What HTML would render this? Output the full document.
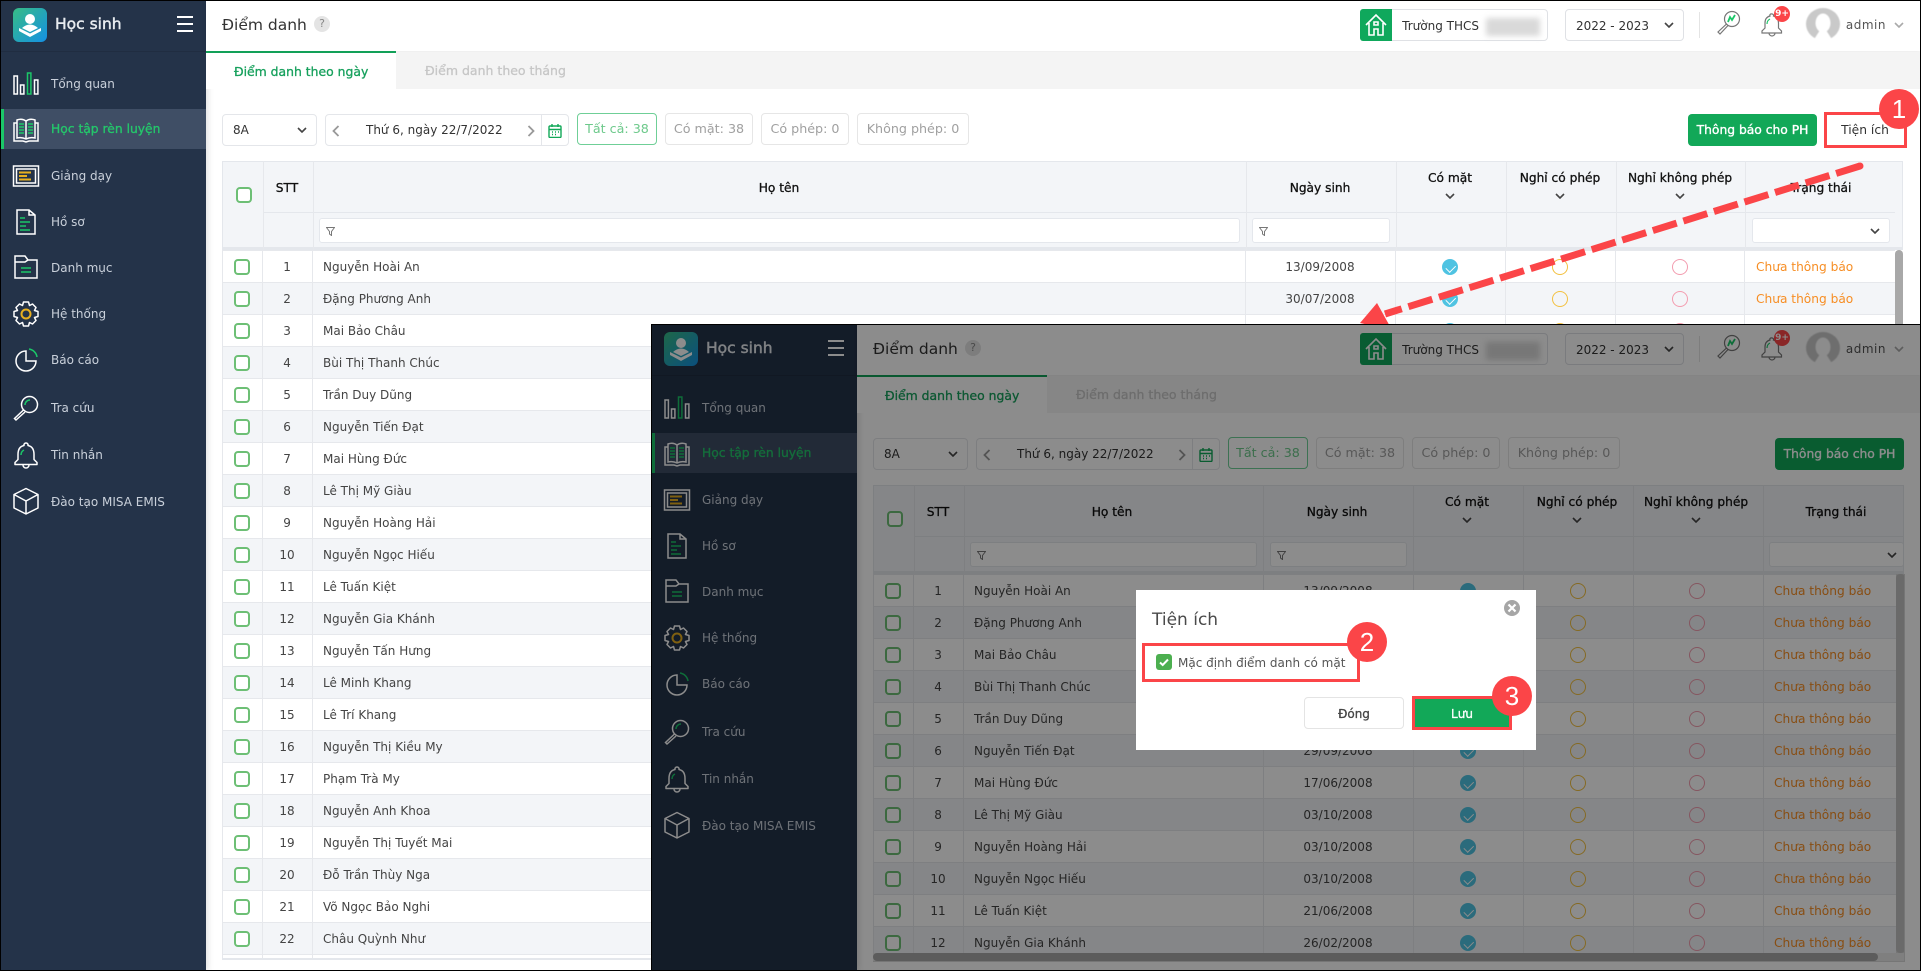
<!DOCTYPE html>
<html lang="vi"><head><meta charset="utf-8"><title>Điểm danh</title>
<style>
*{box-sizing:border-box}
html,body{margin:0;padding:0;width:1921px;height:971px;overflow:hidden;background:#fff;font:12px/1.2 "DejaVu Sans","Liberation Sans",sans-serif;color:#333}
.v{position:absolute;overflow:hidden;background:#fff}
#A{left:0;top:0;width:1921px;height:971px}
#B{left:651px;top:324px;width:1270px;height:647px}
.v>*,.r>*{position:absolute}
.t{white-space:nowrap}
.c{transform:translateX(-50%);white-space:nowrap}
.bb{-webkit-text-stroke:.3px currentColor}
.side{left:0;top:0;width:206px;height:100%;background:#243349;box-shadow:2px 0 6px rgba(0,0,0,.12)}
.side>*{position:absolute}
.m{left:51px;color:#c9d0da;white-space:nowrap;line-height:16px}
.ic{left:12px;width:28px;height:28px;fill:none;stroke:#fff;stroke-width:1.5}
.g{stroke:#1bc768}.y2{stroke:#e8b020}
.logo{left:13px;top:8px;width:34px;height:34px;border-radius:6px;background:linear-gradient(135deg,#37bd85,#1490e4)}
.ham{left:177px;width:16px;height:2px;background:#fff}
.hline{left:1px;top:51px;width:205px;height:1px;background:#202d41}
.act{left:1px;top:109px;width:205px;height:40px;background:#3f4e65;border-left:3px solid #1bc768}
.top{left:206px;right:0;top:0;height:51px;background:#fff;box-shadow:0 1px 4px rgba(0,0,0,.1)}
.strip{left:206px;right:0;top:52px;height:37px;background:#f4f4f4}
.tabl{left:206px;top:51px;width:190px;height:38px;background:#fff;border-top:2.5px solid #12a058}
.box{background:#fff;border:1px solid #dfe1e5;border-radius:4px}
.chip{top:113px;height:32px;border:1px solid #e6e6e6;border-radius:4px;background:#fff;color:#a0a0a0;font-size:12.7px;line-height:30px;text-align:center;white-space:nowrap}
.chev{width:10px;height:6px;fill:none;stroke:#444;stroke-width:1.6}
.gbtn{top:114px;width:129px;height:32px;background:#12a858;border-radius:4px;color:#fff;font-size:12.3px;line-height:32px;text-align:center;-webkit-text-stroke:.35px #fff;white-space:nowrap}
.th{background:#f3f5f8;left:222px;top:161px;height:89px;border:1px solid #e4e7ec;border-bottom:3px solid #e4e7ec}
.hl{height:1px;background:#e4e7ec;top:212px;left:263px}
.vl{width:1px;background:#e6e8ec;top:161px}
.tx{color:#111;line-height:16px;white-space:nowrap;font-size:12.2px}
.fi{top:218px;height:25px;background:#fff;border:1px solid #e4e7ec;border-radius:3px}
.fn{top:227px;width:9px;height:9px;fill:none;stroke:#777;stroke-width:1}
.r{left:222px;height:32px;background:#fff;border-top:1px solid #e6e8ec}
.r.e{background:#f3f5f8}
.k{left:12px;top:8px;width:16px;height:16px;border:2px solid #6dbf75;border-radius:4px;background:#fff}
.s{left:65px;width:0;text-align:center;line-height:33px;display:flex;justify-content:center;white-space:nowrap;color:#444}
.n{left:101px;line-height:33px;color:#444;white-space:nowrap}
.d{line-height:33px;color:#444;white-space:nowrap;transform:translateX(-50%)}
.o{top:8px;width:16px;height:16px;border-radius:50%;transform:translateX(-50%);border:1px solid}
.a{background:#4fc3e2;border-color:#4fc3e2}
.a:after{content:"";position:absolute;left:4.5px;top:2.5px;width:4.5px;height:7.5px;border:solid #fff;border-width:0 1.5px 1.5px 0;transform:rotate(45deg)}
.y{border-color:#f3c141}.p{border-color:#f39db0}
.st{line-height:33px;color:#f78e24;white-space:nowrap;font-size:12.2px}
#A .d{left:1098px}#A .o1{left:1228px}#A .o2{left:1338px}#A .o3{left:1458px}#A .st{left:1534px}
#B .d{left:465px}#B .o1{left:595px}#B .o2{left:705px}#B .o3{left:824px}#B .st{left:901px}
#A .r{width:1673px}#B .r{width:1023px}
.dim{left:0;top:0;width:100%;height:100%;background:rgba(0,0,0,.45)}
.frame{position:absolute;background:#000}
.modal{position:absolute;left:1136px;top:590px;width:400px;height:160px;background:#fff}
.redb{position:absolute;border:3px solid #fb4548}
.num{position:absolute;width:40px;height:40px;border-radius:50%;background:#fb4548;color:#fff;font:26px/40px "Liberation Sans",sans-serif;text-align:center}
.abs{position:absolute;white-space:nowrap}
</style></head><body>
<svg width="0" height="0" style="position:absolute"><defs>
<symbol id="i1" viewBox="0 0 28 28"><rect x="2" y="7" width="3.4" height="18"/><rect x="8.5" y="16" width="3.4" height="9"/><rect class="g" x="15.5" y="4" width="3.4" height="21"/><rect x="22.5" y="11" width="3.4" height="14"/></symbol>
<symbol id="i2" viewBox="0 0 28 28"><path d="M5 5q5-2 9 1q4-3 9-1V23q-5-1-9 1q-4-2-9-1ZM14 6V24M5 8H2V26H11l3 1 3-1h9V8h-3"/><path class="g" d="M7 9h5M7 12h5M7 15h5M7 18h5M16 9h5M16 12h5M16 15h5M16 18h5"/></symbol>
<symbol id="i3" viewBox="0 0 28 28"><rect x="1.5" y="5" width="25" height="20"/><rect x="4.5" y="8" width="19" height="14"/><path class="y2" stroke-width="2" d="M7 11.500h12M7 15h8M7 18.500h12"/></symbol>
<symbol id="i4" viewBox="0 0 28 28"><path d="M5 3h12l6 5v19H5ZM17 3v5h6"/><path class="g" d="M8 11h5M8 15h10M8 19h6M8 23h10"/></symbol>
<symbol id="i5" viewBox="0 0 28 28"><path d="M3 3h10l3 4h9v18H3ZM3 9h10l3-2"/><path class="g" d="M9 15h10M9 19h10"/></symbol>
<symbol id="i6" viewBox="0 0 28 28"><path stroke-linejoin="round" d="M11.500 2h5l1 3.500 3-1.500 3.500 3.500-1.500 3 3.500 1v5l-3.500 1 1.500 3-3.500 3.500-3-1.500-1 3.500h-5l-1-3.500-3 1.500-3.500-3.500 1.500-3-3.500-1v-5l3.500-1-1.500-3 3.500-3.500 3 1.500z"/><circle class="y2" cx="14" cy="14" r="4.500" stroke-width="2"/></symbol>
<symbol id="i7" viewBox="0 0 28 28"><path d="M14 5a10 10 0 1 0 10 10H14Z"/><path class="g" d="M17 3a9.500 9.500 0 0 1 8 8"/></symbol>
<symbol id="i8" viewBox="0 0 28 28"><circle cx="17.500" cy="10.500" r="8"/><path d="M11.500 16 2.500 24.500 4 26 13 18"/><path class="g" d="M13 11a5 5 0 0 1 5-5"/></symbol>
<symbol id="i9" viewBox="0 0 28 28"><path stroke-linejoin="round" d="M14 2a2 2 0 0 1 2 2.500c5 1 6 5 6 9v5l3 3v2H3v-2l3-3v-5c0-4 1-8 6-9A2 2 0 0 1 14 2zM11 24a3 3 0 0 0 6 0"/><path class="g" d="M9 14c0-2 1-4 3-5"/></symbol>
<symbol id="i10" viewBox="0 0 28 28"><path stroke-linejoin="round" d="M14 1.500 26 7.500V21L14 27 2 21V7.500ZM2 7.500 14 14l12-6.500M14 14V27"/></symbol>
<symbol id="lg" viewBox="0 0 34 34"><circle cx="17" cy="11" r="5" fill="#fff"/><path d="M9 20q8-7 16 0l-8 4z" fill="#fff"/><path d="M6 20l11 5.500L28 20v3l-11 6L6 23z" fill="#fff"/></symbol>
<symbol id="dn" viewBox="0 0 10 6"><path d="M1 1l4 4 4-4"/></symbol>
<symbol id="fn" viewBox="0 0 9 9"><path d="M.5.500h8L5.500 4.500V8.500L3.500 7V4.500z"/></symbol>
<symbol id="av" viewBox="0 0 34 33"><ellipse cx="17" cy="16" rx="17" ry="16" fill="#c9c9c9"/><ellipse cx="17" cy="15" rx="7.500" ry="9.500" fill="#fff"/><path d="M14 22h6l7 11H7z" fill="#fff"/></symbol>
</defs></svg>

<div id="A" class="v">
<div class="side"><div class="logo"><svg width="34" height="34"><use href="#lg"/></svg></div><div class="t" style="left:55px;top:15px;font-size:15.5px;color:#e8ecf0;-webkit-text-stroke:.45px #e8ecf0">Học sinh</div><div class="ham" style="top:16px"></div><div class="ham" style="top:23px"></div><div class="ham" style="top:30px"></div><div class="hline"></div><div class="act"></div>
<svg class="ic" style="top:69px"><use href="#i1"/></svg><div class="m" style="top:76px">Tổng quan</div>
<svg class="ic" style="top:115px"><use href="#i2"/></svg><div class="m bb" style="top:121px;color:#24c86b;font-size:12.3px">Học tập rèn luyện</div>
<svg class="ic" style="top:161px"><use href="#i3"/></svg><div class="m" style="top:168px">Giảng dạy</div>
<svg class="ic" style="top:207px"><use href="#i4"/></svg><div class="m" style="top:214px">Hồ sơ</div>
<svg class="ic" style="top:253px"><use href="#i5"/></svg><div class="m" style="top:260px">Danh mục</div>
<svg class="ic" style="top:300px"><use href="#i6"/></svg><div class="m" style="top:306px">Hệ thống</div>
<svg class="ic" style="top:346px"><use href="#i7"/></svg><div class="m" style="top:352px">Báo cáo</div>
<svg class="ic" style="top:394px"><use href="#i8"/></svg><div class="m" style="top:400px">Tra cứu</div>
<svg class="ic" style="top:441px"><use href="#i9"/></svg><div class="m" style="top:447px">Tin nhắn</div>
<svg class="ic" style="top:487px"><use href="#i10"/></svg><div class="m" style="top:494px">Đào tạo MISA EMIS</div>
</div>
<div class="top"></div>
<div class="t" style="left:222px;top:16px;font-size:15.500px;color:#333">Điểm danh</div>
<div style="left:314px;top:16px;width:16px;height:16px;border-radius:50%;background:#e4e4e4;color:#888;text-align:center;line-height:16px;font-size:11px">?</div>
<div style="right:373px;top:9px;width:188px;height:32px" class="box"></div><div style="right:529px;top:9px;width:32px;height:32px;background:#0fa85c;border-radius:3px 0 0 3px"><svg width="32" height="32" fill="none" stroke="#fff" stroke-width="1.6"><path d="M6 16 16 6l10 10M9 14v12h5v-6h4v6h5V14M14 13h4v3h-4z"/></svg></div>
<div class="t" style="right:442px;top:18px;line-height:16px">Trường THCS</div><div style="right:381px;top:18px;width:54px;height:18px;background:#d9d9d9;filter:blur(3px)"></div>
<div class="box" style="right:237px;top:9px;width:119px;height:32px"></div><div class="t" style="right:272px;top:18px;line-height:16px">2022 - 2023</div><svg class="chev" style="right:247px;top:22px"><use href="#dn"/></svg>
<div style="right:221px;top:12px;width:1px;height:26px;background:#e4e4e4"></div>
<svg style="right:180px;top:10px" width="25" height="25" fill="none" stroke="#777" stroke-width="1.200"><circle cx="16" cy="9" r="7.500"/><path d="M10.500 14 2 22l2 2 8-8.500"/><path stroke="#1bc768" stroke-width="1.800" d="M12 12l2-5 2 3 3-5"/></svg>
<svg style="right:137px;top:12px" width="24" height="26" fill="none" stroke="#777" stroke-width="1.200"><path d="M12 2a1.500 1.500 0 0 1 1.500 2c4 1 5 4 5 7v5l3 3v2H2v-2l3-3v-5c0-3 1-6 5-7A1.500 1.500 0 0 1 12 2zM9 21a3 3 0 0 0 6 0"/><path stroke="#1bc768" d="M7 12c0-2 1-4 3-5"/></svg>
<div style="right:131px;top:6px;width:16px;height:16px;border-radius:50%;background:#fb4548;color:#fff;font-size:9px;line-height:16px;text-align:center;font-weight:bold">9+</div>
<svg style="right:81px;top:8px;filter:blur(.5px)" width="34" height="33"><use href="#av"/></svg>
<div class="t" style="right:35px;top:17px;line-height:16px;color:#555;letter-spacing:.5px">admin</div><svg class="chev" style="right:17px;top:22px;stroke:#aaa"><use href="#dn"/></svg>

<div class="strip"></div><div class="tabl"></div>
<div class="t bb" style="left:234px;top:64px;font-size:12.400px;line-height:16px;color:#16a05c">Điểm danh theo ngày</div>
<div class="t bb" style="left:425px;top:63px;font-size:12.500px;line-height:16px;color:#c6c6c6">Điểm danh theo tháng</div>

<div class="box" style="left:222px;top:114px;width:95px;height:32px;border-color:#e4e6ea"></div><div class="t" style="left:233px;top:122px;line-height:16px">8A</div><svg class="chev" style="left:297px;top:127px"><use href="#dn"/></svg>
<div class="box" style="left:325px;top:114px;width:244px;height:32px;border-color:#e4e6ea"></div><div style="left:541px;top:114px;width:1px;height:32px;background:#e4e6ea"></div>
<svg style="left:332px;top:125px;fill:none;stroke:#999;stroke-width:1.800" width="8" height="12"><path d="M6.500 1 1.500 6l5 5"/></svg><div class="t" style="left:366px;top:122px;line-height:16px">Thứ 6, ngày 22/7/2022</div><svg style="left:527px;top:125px;fill:none;stroke:#999;stroke-width:1.800" width="8" height="12"><path d="M1.500 1l5 5-5 5"/></svg>
<svg style="left:548px;top:124px" width="14" height="14" fill="none" stroke="#12a858" stroke-width="1.400"><rect x="1" y="2" width="12" height="11.500" rx="1"/><path d="M1 5.500h12M4 0v3M10 0v3M4 8h1M7 8h1M10 8h1M4 10.500h1M7 10.500h1"/></svg>
<div class="chip" style="left:577px;width:80px;border-color:#6fcf97;color:#6dc98b">Tất cả: 38</div>
<div class="chip" style="left:665px;width:88px">Có mặt: 38</div><div class="chip" style="left:761px;width:88px">Có phép: 0</div><div class="chip" style="left:857px;width:112px">Không phép: 0</div>
<div class="gbtn" style="left:1688px">Thông báo cho PH</div>
<div class="t" style="left:1865px;top:122px;transform:translateX(-50%);line-height:16px;color:#333;font-size:12.300px">Tiện ích</div>

<div class="th" style="width:1681px"></div>
<div class="hl" style="width:1632px"></div>
<div class="vl" style="left:263px;height:89px"></div><div class="vl" style="left:313px;height:89px"></div><div class="vl" style="left:1246px;height:89px"></div><div class="vl" style="left:1396px;height:89px"></div><div class="vl" style="left:1506px;height:89px"></div><div class="vl" style="left:1616px;height:89px"></div><div class="vl" style="left:1745px;height:89px"></div>
<div style="left:236px;top:187px;width:16px;height:16px;border:2px solid #6dbf75;border-radius:4px;background:#fff"></div>
<div class="tx bb c" style="left:287px;top:180px">STT</div><div class="tx bb c" style="left:779px;top:180px">Họ tên</div><div class="tx bb c" style="left:1320px;top:180px">Ngày sinh</div>
<div class="tx bb c" style="left:1450px;top:170px">Có mặt</div><svg class="chev" style="left:1445px;top:193px"><use href="#dn"/></svg>
<div class="tx bb c" style="left:1560px;top:170px">Nghỉ có phép</div><svg class="chev" style="left:1555px;top:193px"><use href="#dn"/></svg>
<div class="tx bb c" style="left:1680px;top:170px">Nghỉ không phép</div><svg class="chev" style="left:1675px;top:193px"><use href="#dn"/></svg>
<div class="tx bb c" style="left:1821px;top:180px">Trạng thái</div>
<div class="fi" style="left:319px;width:921px"></div><svg class="fn" style="left:326px"><use href="#fn"/></svg>
<div class="fi" style="left:1252px;width:138px"></div><svg class="fn" style="left:1259px"><use href="#fn"/></svg>
<div class="fi" style="left:1752px;width:138px"></div><svg class="chev" style="left:1870px;top:228px"><use href="#dn"/></svg>

<div class="r" style="top:250px"><span class="k"></span><span class="s">1</span><span class="n">Nguyễn Hoài An</span><span class="d">13/09/2008</span><span class="o o1 a"></span><span class="o o2 y"></span><span class="o o3 p"></span><span class="st">Chưa thông báo</span></div>
<div class="r e" style="top:282px"><span class="k"></span><span class="s">2</span><span class="n">Đặng Phương Anh</span><span class="d">30/07/2008</span><span class="o o1 a"></span><span class="o o2 y"></span><span class="o o3 p"></span><span class="st">Chưa thông báo</span></div>
<div class="r" style="top:314px"><span class="k"></span><span class="s">3</span><span class="n">Mai Bảo Châu</span><span class="d">01/01/2008</span><span class="o o1 a"></span><span class="o o2 y"></span><span class="o o3 p"></span></div>
<div class="r e" style="top:346px"><span class="k"></span><span class="s">4</span><span class="n">Bùi Thị Thanh Chúc</span></div>
<div class="r" style="top:378px"><span class="k"></span><span class="s">5</span><span class="n">Trần Duy Dũng</span></div>
<div class="r e" style="top:410px"><span class="k"></span><span class="s">6</span><span class="n">Nguyễn Tiến Đạt</span></div>
<div class="r" style="top:442px"><span class="k"></span><span class="s">7</span><span class="n">Mai Hùng Đức</span></div>
<div class="r e" style="top:474px"><span class="k"></span><span class="s">8</span><span class="n">Lê Thị Mỹ Giàu</span></div>
<div class="r" style="top:506px"><span class="k"></span><span class="s">9</span><span class="n">Nguyễn Hoàng Hải</span></div>
<div class="r e" style="top:538px"><span class="k"></span><span class="s">10</span><span class="n">Nguyễn Ngọc Hiếu</span></div>
<div class="r" style="top:570px"><span class="k"></span><span class="s">11</span><span class="n">Lê Tuấn Kiệt</span></div>
<div class="r e" style="top:602px"><span class="k"></span><span class="s">12</span><span class="n">Nguyễn Gia Khánh</span></div>
<div class="r" style="top:634px"><span class="k"></span><span class="s">13</span><span class="n">Nguyễn Tấn Hưng</span></div>
<div class="r e" style="top:666px"><span class="k"></span><span class="s">14</span><span class="n">Lê Minh Khang</span></div>
<div class="r" style="top:698px"><span class="k"></span><span class="s">15</span><span class="n">Lê Trí Khang</span></div>
<div class="r e" style="top:730px"><span class="k"></span><span class="s">16</span><span class="n">Nguyễn Thị Kiều My</span></div>
<div class="r" style="top:762px"><span class="k"></span><span class="s">17</span><span class="n">Phạm Trà My</span></div>
<div class="r e" style="top:794px"><span class="k"></span><span class="s">18</span><span class="n">Nguyễn Anh Khoa</span></div>
<div class="r" style="top:826px"><span class="k"></span><span class="s">19</span><span class="n">Nguyễn Thị Tuyết Mai</span></div>
<div class="r e" style="top:858px"><span class="k"></span><span class="s">20</span><span class="n">Đỗ Trần Thùy Nga</span></div>
<div class="r" style="top:890px"><span class="k"></span><span class="s">21</span><span class="n">Võ Ngọc Bảo Nghi</span></div>
<div class="r e" style="top:922px"><span class="k"></span><span class="s">22</span><span class="n">Châu Quỳnh Như</span></div>
<div class="vl" style="left:222px;top:250px;height:709px"></div><div class="vl" style="left:262px;top:250px;height:709px"></div><div class="vl" style="left:312px;top:250px;height:709px"></div>
<div style="left:222px;top:954px;width:1681px;height:1px;background:#e6e8ec"></div><div style="left:222px;top:958px;width:1681px;height:2px;background:#e4e7ec"></div>
<div style="left:1245px;top:250px;width:1px;height:100px;background:#e6e8ec"></div><div style="left:1395px;top:250px;width:1px;height:100px;background:#e6e8ec"></div><div style="left:1505px;top:250px;width:1px;height:100px;background:#e6e8ec"></div><div style="left:1615px;top:250px;width:1px;height:100px;background:#e6e8ec"></div><div style="left:1744px;top:250px;width:1px;height:100px;background:#e6e8ec"></div>
<div style="left:1895px;top:250px;width:8px;height:90px;border-radius:4px;background:#a8a8a8"></div>
<svg style="left:0;top:0" width="1921" height="330"><path d="M1860 166 1385 314" stroke="#fb4548" stroke-width="7" stroke-linecap="butt" stroke-dasharray="25 7" fill="none"/><circle cx="1860" cy="166" r="3.500" fill="#fb4548"/><path d="M1377 303 1360 323 1392 330z" fill="#fb4548"/></svg>
<div class="redb" style="left:1824px;top:112px;width:83px;height:36px"></div>
<div class="num" style="left:1879px;top:89px">1</div>
</div>

<div id="B" class="v">
<div class="side"><div class="logo"><svg width="34" height="34"><use href="#lg"/></svg></div><div class="t" style="left:55px;top:15px;font-size:15.5px;color:#e8ecf0;-webkit-text-stroke:.45px #e8ecf0">Học sinh</div><div class="ham" style="top:16px"></div><div class="ham" style="top:23px"></div><div class="ham" style="top:30px"></div><div class="hline"></div><div class="act"></div>
<svg class="ic" style="top:69px"><use href="#i1"/></svg><div class="m" style="top:76px">Tổng quan</div>
<svg class="ic" style="top:115px"><use href="#i2"/></svg><div class="m bb" style="top:121px;color:#24c86b;font-size:12.3px">Học tập rèn luyện</div>
<svg class="ic" style="top:161px"><use href="#i3"/></svg><div class="m" style="top:168px">Giảng dạy</div>
<svg class="ic" style="top:207px"><use href="#i4"/></svg><div class="m" style="top:214px">Hồ sơ</div>
<svg class="ic" style="top:253px"><use href="#i5"/></svg><div class="m" style="top:260px">Danh mục</div>
<svg class="ic" style="top:300px"><use href="#i6"/></svg><div class="m" style="top:306px">Hệ thống</div>
<svg class="ic" style="top:346px"><use href="#i7"/></svg><div class="m" style="top:352px">Báo cáo</div>
<svg class="ic" style="top:394px"><use href="#i8"/></svg><div class="m" style="top:400px">Tra cứu</div>
<svg class="ic" style="top:441px"><use href="#i9"/></svg><div class="m" style="top:447px">Tin nhắn</div>
<svg class="ic" style="top:487px"><use href="#i10"/></svg><div class="m" style="top:494px">Đào tạo MISA EMIS</div>
</div>
<div class="top"></div>
<div class="t" style="left:222px;top:16px;font-size:15.500px;color:#333">Điểm danh</div>
<div style="left:314px;top:16px;width:16px;height:16px;border-radius:50%;background:#e4e4e4;color:#888;text-align:center;line-height:16px;font-size:11px">?</div>
<div style="right:373px;top:9px;width:188px;height:32px" class="box"></div><div style="right:529px;top:9px;width:32px;height:32px;background:#0fa85c;border-radius:3px 0 0 3px"><svg width="32" height="32" fill="none" stroke="#fff" stroke-width="1.6"><path d="M6 16 16 6l10 10M9 14v12h5v-6h4v6h5V14M14 13h4v3h-4z"/></svg></div>
<div class="t" style="right:442px;top:18px;line-height:16px">Trường THCS</div><div style="right:381px;top:18px;width:54px;height:18px;background:#d9d9d9;filter:blur(3px)"></div>
<div class="box" style="right:237px;top:9px;width:119px;height:32px"></div><div class="t" style="right:272px;top:18px;line-height:16px">2022 - 2023</div><svg class="chev" style="right:247px;top:22px"><use href="#dn"/></svg>
<div style="right:221px;top:12px;width:1px;height:26px;background:#e4e4e4"></div>
<svg style="right:180px;top:10px" width="25" height="25" fill="none" stroke="#777" stroke-width="1.200"><circle cx="16" cy="9" r="7.500"/><path d="M10.500 14 2 22l2 2 8-8.500"/><path stroke="#1bc768" stroke-width="1.800" d="M12 12l2-5 2 3 3-5"/></svg>
<svg style="right:137px;top:12px" width="24" height="26" fill="none" stroke="#777" stroke-width="1.200"><path d="M12 2a1.500 1.500 0 0 1 1.500 2c4 1 5 4 5 7v5l3 3v2H2v-2l3-3v-5c0-3 1-6 5-7A1.500 1.500 0 0 1 12 2zM9 21a3 3 0 0 0 6 0"/><path stroke="#1bc768" d="M7 12c0-2 1-4 3-5"/></svg>
<div style="right:131px;top:6px;width:16px;height:16px;border-radius:50%;background:#fb4548;color:#fff;font-size:9px;line-height:16px;text-align:center;font-weight:bold">9+</div>
<svg style="right:81px;top:8px;filter:blur(.5px)" width="34" height="33"><use href="#av"/></svg>
<div class="t" style="right:35px;top:17px;line-height:16px;color:#555;letter-spacing:.5px">admin</div><svg class="chev" style="right:17px;top:22px;stroke:#aaa"><use href="#dn"/></svg>

<div class="strip"></div><div class="tabl"></div>
<div class="t bb" style="left:234px;top:64px;font-size:12.400px;line-height:16px;color:#16a05c">Điểm danh theo ngày</div>
<div class="t bb" style="left:425px;top:63px;font-size:12.500px;line-height:16px;color:#c6c6c6">Điểm danh theo tháng</div>

<div class="box" style="left:222px;top:114px;width:95px;height:32px;border-color:#e4e6ea"></div><div class="t" style="left:233px;top:122px;line-height:16px">8A</div><svg class="chev" style="left:297px;top:127px"><use href="#dn"/></svg>
<div class="box" style="left:325px;top:114px;width:244px;height:32px;border-color:#e4e6ea"></div><div style="left:541px;top:114px;width:1px;height:32px;background:#e4e6ea"></div>
<svg style="left:332px;top:125px;fill:none;stroke:#999;stroke-width:1.800" width="8" height="12"><path d="M6.500 1 1.500 6l5 5"/></svg><div class="t" style="left:366px;top:122px;line-height:16px">Thứ 6, ngày 22/7/2022</div><svg style="left:527px;top:125px;fill:none;stroke:#999;stroke-width:1.800" width="8" height="12"><path d="M1.500 1l5 5-5 5"/></svg>
<svg style="left:548px;top:124px" width="14" height="14" fill="none" stroke="#12a858" stroke-width="1.400"><rect x="1" y="2" width="12" height="11.500" rx="1"/><path d="M1 5.500h12M4 0v3M10 0v3M4 8h1M7 8h1M10 8h1M4 10.500h1M7 10.500h1"/></svg>
<div class="chip" style="left:577px;width:80px;border-color:#6fcf97;color:#6dc98b">Tất cả: 38</div>
<div class="chip" style="left:665px;width:88px">Có mặt: 38</div><div class="chip" style="left:761px;width:88px">Có phép: 0</div><div class="chip" style="left:857px;width:112px">Không phép: 0</div>
<div class="gbtn" style="left:1124px">Thông báo cho PH</div>

<div class="th" style="width:1031px"></div>
<div class="hl" style="width:990px"></div>
<div class="vl" style="left:263px;height:89px"></div><div class="vl" style="left:313px;height:89px"></div><div class="vl" style="left:612px;height:89px"></div><div class="vl" style="left:762px;height:89px"></div><div class="vl" style="left:872px;height:89px"></div><div class="vl" style="left:982px;height:89px"></div><div class="vl" style="left:1112px;height:89px"></div>
<div style="left:236px;top:187px;width:16px;height:16px;border:2px solid #6dbf75;border-radius:4px;background:#fff"></div>
<div class="tx bb c" style="left:287px;top:180px">STT</div><div class="tx bb c" style="left:461px;top:180px">Họ tên</div><div class="tx bb c" style="left:686px;top:180px">Ngày sinh</div>
<div class="tx bb c" style="left:816px;top:170px">Có mặt</div><svg class="chev" style="left:811px;top:193px"><use href="#dn"/></svg>
<div class="tx bb c" style="left:926px;top:170px">Nghỉ có phép</div><svg class="chev" style="left:921px;top:193px"><use href="#dn"/></svg>
<div class="tx bb c" style="left:1045px;top:170px">Nghỉ không phép</div><svg class="chev" style="left:1040px;top:193px"><use href="#dn"/></svg>
<div class="tx bb c" style="left:1185px;top:180px">Trạng thái</div>
<div class="fi" style="left:319px;width:287px"></div><svg class="fn" style="left:326px"><use href="#fn"/></svg>
<div class="fi" style="left:619px;width:137px"></div><svg class="fn" style="left:626px"><use href="#fn"/></svg>
<div class="fi" style="left:1118px;width:135px"></div><svg class="chev" style="left:1236px;top:228px"><use href="#dn"/></svg>

<div class="r" style="top:250px"><span class="k"></span><span class="s">1</span><span class="n">Nguyễn Hoài An</span><span class="d">13/09/2008</span><span class="o o1 a"></span><span class="o o2 y"></span><span class="o o3 p"></span><span class="st">Chưa thông báo</span></div>
<div class="r e" style="top:282px"><span class="k"></span><span class="s">2</span><span class="n">Đặng Phương Anh</span><span class="d">30/07/2008</span><span class="o o1 a"></span><span class="o o2 y"></span><span class="o o3 p"></span><span class="st">Chưa thông báo</span></div>
<div class="r" style="top:314px"><span class="k"></span><span class="s">3</span><span class="n">Mai Bảo Châu</span><span class="d">15/05/2008</span><span class="o o1 a"></span><span class="o o2 y"></span><span class="o o3 p"></span><span class="st">Chưa thông báo</span></div>
<div class="r e" style="top:346px"><span class="k"></span><span class="s">4</span><span class="n">Bùi Thị Thanh Chúc</span><span class="d">20/03/2008</span><span class="o o1 a"></span><span class="o o2 y"></span><span class="o o3 p"></span><span class="st">Chưa thông báo</span></div>
<div class="r" style="top:378px"><span class="k"></span><span class="s">5</span><span class="n">Trần Duy Dũng</span><span class="d">11/08/2008</span><span class="o o1 a"></span><span class="o o2 y"></span><span class="o o3 p"></span><span class="st">Chưa thông báo</span></div>
<div class="r e" style="top:410px"><span class="k"></span><span class="s">6</span><span class="n">Nguyễn Tiến Đạt</span><span class="d">29/09/2008</span><span class="o o1 a"></span><span class="o o2 y"></span><span class="o o3 p"></span><span class="st">Chưa thông báo</span></div>
<div class="r" style="top:442px"><span class="k"></span><span class="s">7</span><span class="n">Mai Hùng Đức</span><span class="d">17/06/2008</span><span class="o o1 a"></span><span class="o o2 y"></span><span class="o o3 p"></span><span class="st">Chưa thông báo</span></div>
<div class="r e" style="top:474px"><span class="k"></span><span class="s">8</span><span class="n">Lê Thị Mỹ Giàu</span><span class="d">03/10/2008</span><span class="o o1 a"></span><span class="o o2 y"></span><span class="o o3 p"></span><span class="st">Chưa thông báo</span></div>
<div class="r" style="top:506px"><span class="k"></span><span class="s">9</span><span class="n">Nguyễn Hoàng Hải</span><span class="d">03/10/2008</span><span class="o o1 a"></span><span class="o o2 y"></span><span class="o o3 p"></span><span class="st">Chưa thông báo</span></div>
<div class="r e" style="top:538px"><span class="k"></span><span class="s">10</span><span class="n">Nguyễn Ngọc Hiếu</span><span class="d">03/10/2008</span><span class="o o1 a"></span><span class="o o2 y"></span><span class="o o3 p"></span><span class="st">Chưa thông báo</span></div>
<div class="r" style="top:570px"><span class="k"></span><span class="s">11</span><span class="n">Lê Tuấn Kiệt</span><span class="d">21/06/2008</span><span class="o o1 a"></span><span class="o o2 y"></span><span class="o o3 p"></span><span class="st">Chưa thông báo</span></div>
<div class="r e" style="top:602px"><span class="k"></span><span class="s">12</span><span class="n">Nguyễn Gia Khánh</span><span class="d">26/02/2008</span><span class="o o1 a"></span><span class="o o2 y"></span><span class="o o3 p"></span><span class="st">Chưa thông báo</span></div>
<div class="vl" style="left:222px;top:250px;height:387px"></div><div class="vl" style="left:262px;top:250px;height:387px"></div><div class="vl" style="left:312px;top:250px;height:387px"></div><div class="vl" style="left:612px;top:250px;height:387px"></div><div class="vl" style="left:762px;top:250px;height:387px"></div><div class="vl" style="left:872px;top:250px;height:387px"></div><div class="vl" style="left:982px;top:250px;height:387px"></div><div class="vl" style="left:1112px;top:250px;height:387px"></div>
<div style="left:1245px;top:250px;width:9px;height:388px;background:#d8d8d8"></div>
<div style="left:1245px;top:250px;width:9px;height:379px;border-radius:4px;background:#c2c2c2"></div>
<div style="left:222px;top:629px;width:1031px;height:8px;background:#e8e8e8"></div>
<div style="left:222px;top:629px;width:1005px;height:8px;border-radius:4px;background:#a8a8a8"></div>
<div style="left:222px;top:637px;width:1032px;height:1px;background:#d8d8d8"></div>
<div style="left:1253px;top:250px;width:1px;height:388px;background:#d8d8d8"></div>
<div class="dim"></div>
</div>

<div class="modal"></div>
<div class="abs" style="left:1152px;top:609px;font-size:17px;line-height:22px;color:#4a4a4a">Tiện ích</div>
<div class="abs" style="left:1504px;top:600px;width:16px;height:16px;border-radius:50%;background:#a6a6a6"><svg width="16" height="16" stroke="#fff" stroke-width="2.200"><path d="M4.500 4.500l7 7M11.500 4.500l-7 7"/></svg></div>
<div class="redb" style="left:1142px;top:643px;width:218px;height:39px"></div>
<div class="abs" style="left:1156px;top:654px;width:16px;height:16px;border-radius:3px;background:#4caf50"><svg width="16" height="16" fill="none" stroke="#fff" stroke-width="2"><path d="M4 8.500l2.700 2.500L12 5.500"/></svg></div>
<div class="abs" style="left:1178px;top:655px;line-height:16px;color:#555">Mặc định điểm danh có mặt</div>
<div class="abs" style="left:1304px;top:697px;width:100px;height:32px;border:1px solid #e4e4e4;border-radius:4px;background:#fff;color:#444;text-align:center;line-height:32px;-webkit-text-stroke:.3px #444">Đóng</div>
<div class="abs" style="left:1412px;top:696px;width:100px;height:34px;background:#12a858;border:3px solid #fb4548;color:#fff;text-align:center;line-height:30px;-webkit-text-stroke:.3px #fff">Lưu</div>
<div class="num" style="left:1347px;top:622px">2</div>
<div class="num" style="left:1492px;top:676px">3</div>

<div class="frame" style="left:0;top:0;width:1921px;height:1px"></div>
<div class="frame" style="left:0;top:0;width:1px;height:971px"></div>
<div class="frame" style="left:1920px;top:0;width:1px;height:971px"></div>
<div class="frame" style="left:0;top:970px;width:1921px;height:1px"></div>
<div class="frame" style="left:651px;top:324px;width:1270px;height:1px"></div>
<div class="frame" style="left:651px;top:324px;width:1px;height:647px"></div>
</body></html>
